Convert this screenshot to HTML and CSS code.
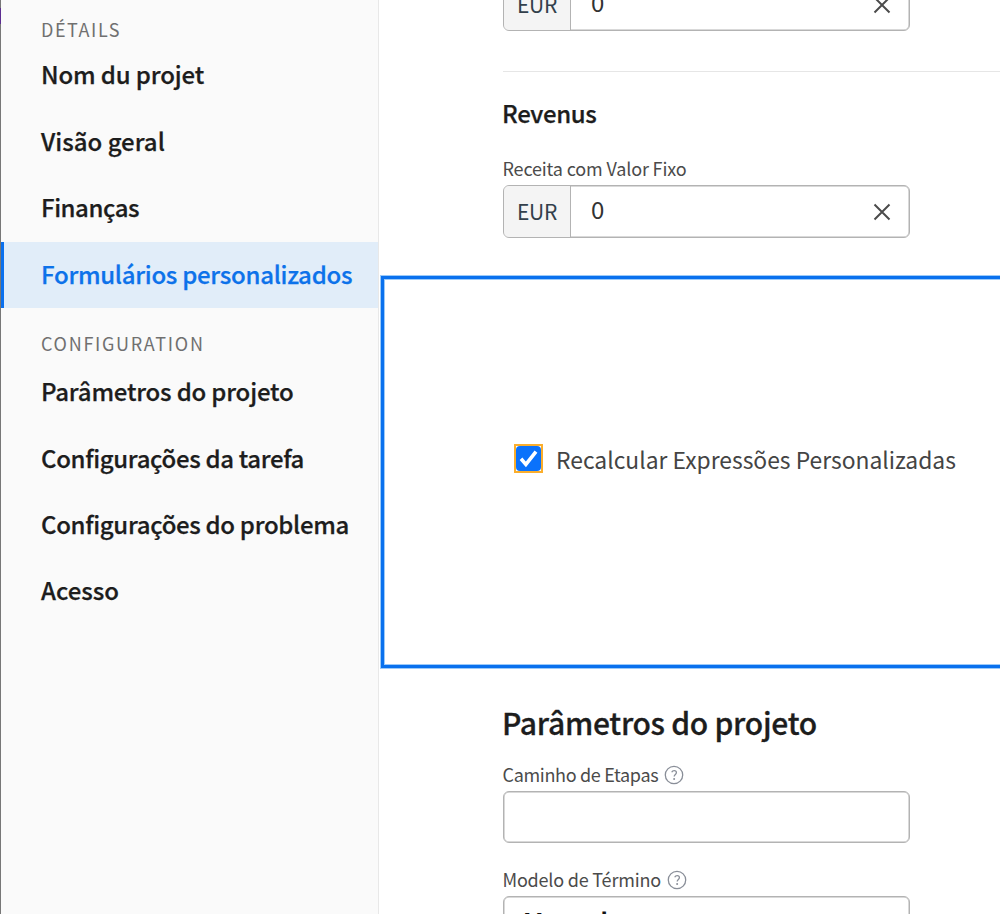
FILE: index.html
```html
<!DOCTYPE html>
<html lang="pt">
<head>
<meta charset="utf-8">
<title>Formulários personalizados</title>
<link rel="stylesheet" href="styles.css">
</head>
<body>
<div class="app">
  <div class="edge"><span class="edge-accent"></span></div>
  <nav class="sidebar">
    <h3 class="group group-first"><span class="t-details">DÉTAILS</span></h3>
    <a class="item t-nom">Nom du projet</a>
    <a class="item t-visao">Visão geral</a>
    <a class="item t-fin">Finanças</a>
    <a class="item item-active t-form">Formulários personalizados</a>
    <h3 class="group"><span class="t-conf">CONFIGURATION</span></h3>
    <a class="item t-param">Parâmetros do projeto</a>
    <a class="item t-tarefa">Configurações da tarefa</a>
    <a class="item t-prob">Configurações do problema</a>
    <a class="item t-acesso">Acesso</a>
  </nav>
  <main class="main">
    <section class="finance">
      <div class="field">
        <span class="prefix">EUR</span><span class="value">0</span>
        <svg class="clear" viewBox="0 0 18 18"><path d="M1.5 1.5l15 15M16.5 1.5l-15 15"/></svg>
      </div>
      <div class="rule"></div>
      <h3 class="subtitle">Revenus</h3>
      <div class="label label-receita"><span class="t-receita">Receita com Valor Fixo</span></div>
      <div class="field">
        <span class="prefix">EUR</span><span class="value">0</span>
        <svg class="clear" viewBox="0 0 18 18"><path d="M1.5 1.5l15 15M16.5 1.5l-15 15"/></svg>
      </div>
    </section>
    <section class="callout">
      <span class="check">
        <svg viewBox="0 0 25 25"><path d="M5 12.8l4.9 5.6L20 5.6"/></svg>
      </span>
      <span class="check-label">Recalcular Expressões Personalizadas</span>
    </section>
    <section class="settings">
      <h2 class="title">Parâmetros do projeto</h2>
      <div class="label"><span class="t-caminho">Caminho de Etapas</span>
        <svg class="help" viewBox="0 0 20 20"><circle cx="10" cy="10" r="8.7"/><path d="M7.7 7.3c.6-1.2 1.5-1.6 2.5-1.6 1.3 0 2.2.8 2.2 1.9 0 1.8-2.2 1.9-2.2 4"/><circle class="dot" cx="10.1" cy="14" r="1"/></svg>
      </div>
      <div class="field field-empty"></div>
      <div class="label label-second"><span class="t-modelo">Modelo de Término</span>
        <svg class="help" viewBox="0 0 20 20"><circle cx="10" cy="10" r="8.7"/><path d="M7.7 7.3c.6-1.2 1.5-1.6 2.5-1.6 1.3 0 2.2.8 2.2 1.9 0 1.8-2.2 1.9-2.2 4"/><circle class="dot" cx="10.1" cy="14" r="1"/></svg>
      </div>
      <div class="field select">Manual</div>
    </section>
  </main>
</div>
</body>
</html>
```
FILE: styles.css
```css
* { box-sizing: border-box; }
body {
  margin: 0;
  background: #fff;
  color: #1d1d1d;
  font-family: "Noto Sans CJK SC", "Open Sans", sans-serif;
}
h2, h3 { margin: 0; }
.app { display: flex; width: 1000px; height: 914px; overflow: hidden; }
.edge { flex: none; width: 1px; background: #777; padding-top: 8px; }
.edge-accent { display: block; height: 16px; background: #5c2d91; }
.sidebar {
  flex: none;
  width: 378px;
  background: #fafafa;
  border-right: 1px solid #e8e8e8;
}
.group {
  height: 51.2px;
  padding: 9px 0 0 40px;
  font-size: 18px;
  line-height: 52px;
  font-weight: 400;
  color: #707070;
}
.group-first { height: 42.4px; padding-top: 5px; line-height: 48px; }
.item {
  display: block;
  height: 66.4px;
  padding-left: 40px;
  line-height: 64.4px;
  font-size: 24px;
  font-weight: 500;
  white-space: nowrap;
  -webkit-text-stroke: 0.25px currentColor;
}
.item-active {
  color: #0d72ea;
  background: #e1edf9;
  border-left: 3px solid #0a70ee;
  padding-left: 37px;
}
.t-details { letter-spacing: 1.55px; }
.t-conf { letter-spacing: 1.7px; }
.t-nom { letter-spacing: -0.15px; }
.t-fin { letter-spacing: -0.45px; }
.t-form { letter-spacing: -0.28px; }
.t-param { letter-spacing: -0.2px; }
.t-tarefa { letter-spacing: -0.34px; }
.t-prob { letter-spacing: -0.33px; }
.t-receita { letter-spacing: -0.15px; }
.t-caminho { letter-spacing: -0.32px; }
.t-modelo { letter-spacing: -0.2px; }
.main { flex: 1; min-width: 0; display: flex; flex-direction: column; }
.finance { flex: none; height: 297px; margin-top: -22px; padding-left: 124px; }
.field {
  display: flex;
  align-items: center;
  width: 407px;
  height: 53px;
  border: 1px solid #b3b3b3;
  box-shadow: inset 0 0 0 0.5px #b3b3b3;
  border-radius: 6px;
  overflow: hidden;
  background: #fff;
}
.prefix {
  width: 67px;
  height: 100%;
  padding-left: 13px;
  line-height: 51px;
  font-size: 21px;
  letter-spacing: -0.3px;
  color: #323f4b;
  background: #f4f4f4;
  border-right: 1px solid #b3b3b3;
}
.value { padding: 0 0 6px 20px; font-size: 24px; line-height: 45px; color: #323232; }
.clear { width: 18px; height: 18px; margin: 0 18px 0 auto; fill: none; stroke: #4b4b4b; stroke-width: 2; }
.rule { height: 1px; margin-top: 40px; background: #e6e6e6; }
.subtitle {
  height: 83px;
  margin-left: -1px;
  padding-top: 21px;
  line-height: 40px;
  font-size: 24px;
  font-weight: 500;
  letter-spacing: -0.35px;
  -webkit-text-stroke: 0.25px currentColor;
}
.label { display: flex; align-items: center; height: 27px; margin-left: -0.5px; line-height: 27px; font-size: 18px; color: #4b4b4b; }
.label-receita { height: 30px; align-items: flex-start; }
.callout {
  flex: none;
  display: flex;
  width: 640px;
  height: 394px;
  margin-left: 1px;
  padding: 168px 0 0 133px;
  border: 1px solid #9bcaf9;
  box-shadow: inset 0 0 0 3px #0971ee, inset 0 0 0 4px #9bcaf9;
}
.check { width: 29px; height: 29px; border: 2px solid #fbae2c; background: #fff; }
.check svg { display: block; width: 25px; height: 25px; border-radius: 4px; background: #0b72fb; fill: none; stroke: #fff; stroke-width: 3.6; }
.check-label { margin-left: 13px; line-height: 30px; font-size: 22.85px; color: #444; white-space: nowrap; }
.settings { padding: 29px 0 0 124px; }
.title {
  height: 63px;
  margin-left: -1px;
  line-height: 49px;
  font-size: 30px;
  font-weight: 500;
  letter-spacing: -0.28px;
  -webkit-text-stroke: 0.3px currentColor;
}
.help { width: 20px; height: 20px; margin-left: 6px; fill: none; stroke: #898e98; stroke-width: 1.3; }
.help .dot { fill: #898e98; stroke: none; }
.field-empty { height: 52px; margin-top: 3px; }
.label-second { margin-top: 23px; }
.select { margin-top: 3px; padding: 0 20px 4px 19px; font-size: 24px; line-height: 47px; font-weight: 700; letter-spacing: -0.4px; color: #111; }
```
